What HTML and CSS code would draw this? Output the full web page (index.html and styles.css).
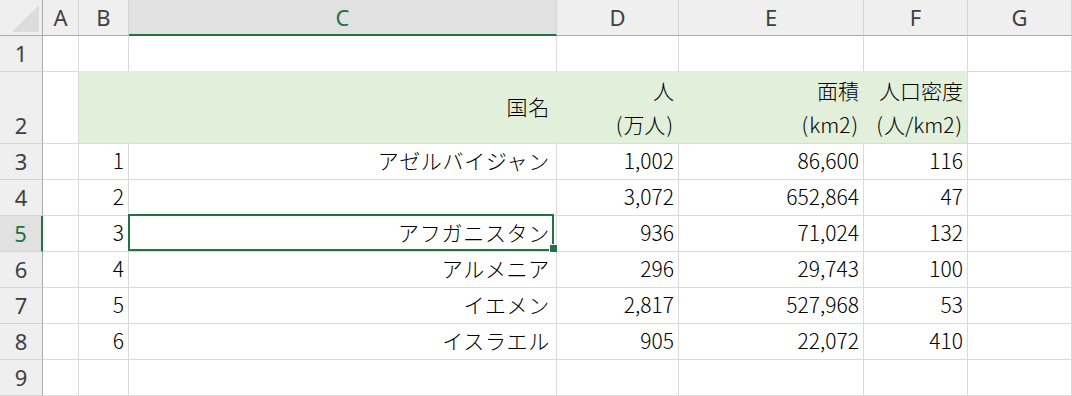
FILE: index.html
```html
<!DOCTYPE html>
<html lang="ja">
<head>
<meta charset="utf-8">
<title>Sheet</title>
<link rel="stylesheet" href="styles.css">
</head>
<body>
<div class="sheet">
  <div class="ch corner"><svg width="42" height="35" viewBox="0 0 42 35"><polygon points="12,32 39,32 39,5" fill="#dcdcdc"/></svg></div>
  <div class="ch">A</div>
  <div class="ch">B</div>
  <div class="ch sel">C</div>
  <div class="ch">D</div>
  <div class="ch">E</div>
  <div class="ch">F</div>
  <div class="ch">G</div>

  <div class="rh">1</div>
  <div class="c"></div>
  <div class="c gt"></div>
  <div class="c gt"></div>
  <div class="c gt"></div>
  <div class="c gt"></div>
  <div class="c gt"></div>
  <div class="c"></div>

  <div class="rh">2</div>
  <div class="c"></div>
  <div class="c g"></div>
  <div class="c g mid name">国名</div>
  <div class="c g mid wrap"><div>人<br><span class="p">(</span>万人<span class="p">)</span></div></div>
  <div class="c g mid wrap"><div>面積<br><span class="p">(</span>km2<span class="p">)</span></div></div>
  <div class="c g gl mid wrap"><div>人口密度<br><span class="p">(</span>人/km2<span class="p">)</span></div></div>
  <div class="c"></div>

  <div class="rh">3</div>
  <div class="c"></div>
  <div class="c">1</div>
  <div class="c name">アゼルバイジャン</div>
  <div class="c">1,002</div>
  <div class="c">86,600</div>
  <div class="c">116</div>
  <div class="c"></div>

  <div class="rh">4</div>
  <div class="c"></div>
  <div class="c">2</div>
  <div class="c name"></div>
  <div class="c">3,072</div>
  <div class="c">652,864</div>
  <div class="c">47</div>
  <div class="c"></div>

  <div class="rh rsel">5</div>
  <div class="c"></div>
  <div class="c">3</div>
  <div class="c name">アフガニスタン<span class="selbox"><span class="handle"></span></span></div>
  <div class="c">936</div>
  <div class="c">71,024</div>
  <div class="c">132</div>
  <div class="c"></div>

  <div class="rh">6</div>
  <div class="c"></div>
  <div class="c">4</div>
  <div class="c name">アルメニア</div>
  <div class="c">296</div>
  <div class="c">29,743</div>
  <div class="c">100</div>
  <div class="c"></div>

  <div class="rh">7</div>
  <div class="c"></div>
  <div class="c">5</div>
  <div class="c name">イエメン</div>
  <div class="c">2,817</div>
  <div class="c">527,968</div>
  <div class="c">53</div>
  <div class="c"></div>

  <div class="rh">8</div>
  <div class="c"></div>
  <div class="c">6</div>
  <div class="c name">イスラエル</div>
  <div class="c">905</div>
  <div class="c">22,072</div>
  <div class="c">410</div>
  <div class="c"></div>

  <div class="rh">9</div>
  <div class="c"></div>
  <div class="c"></div>
  <div class="c"></div>
  <div class="c"></div>
  <div class="c"></div>
  <div class="c"></div>
  <div class="c"></div>
</div>
</body>
</html>
```
FILE: styles.css
```css
html, body {
  margin: 0;
  padding: 0;
  background: #ffffff;
}
.sheet {
  display: grid;
  grid-template-columns: 43px 36px 50px 428px 122px 185px 104px 1fr;
  grid-template-rows: 36px 36px 72px repeat(7, 36px);
  width: 1072px;
  height: 396px;
  overflow: hidden;
}
.ch {
  box-sizing: border-box;
  background: #efefef;
  border-right: 1px solid #d4d4d4;
  border-bottom: 1px solid #ababab;
  display: flex;
  align-items: center;
  justify-content: center;
  font-family: "Noto Sans", "Liberation Sans", sans-serif;
  font-size: 22px;
  color: #404040;
  padding-bottom: 2px;
}
.ch.corner {
  border-right: 1px solid #ababab;
  padding: 0;
  align-items: flex-start;
  justify-content: flex-start;
}
.ch.corner svg {
  display: block;
}
.ch.sel {
  background: #e1e1e1;
  color: #217346;
  border-bottom: 2px solid #217346;
  padding-bottom: 1px;
}
.rh {
  box-sizing: border-box;
  background: #efefef;
  border-right: 1px solid #ababab;
  border-bottom: 1px solid #d4d4d4;
  display: flex;
  align-items: flex-end;
  justify-content: center;
  font-family: "Noto Sans", "Liberation Sans", sans-serif;
  font-size: 22px;
  line-height: 30px;
  padding-bottom: 3px;
  color: #404040;
}
.rh.rsel {
  background: #e1e1e1;
  color: #217346;
  border-right: 2px solid #217346;
}
.c {
  position: relative;
  box-sizing: border-box;
  border-right: 1px solid #dadada;
  border-bottom: 1px solid #dadada;
  display: flex;
  align-items: flex-end;
  justify-content: flex-end;
  padding: 0 4px 2px 4px;
  font-family: "Noto Sans CJK JP", "Noto Sans", sans-serif;
  font-size: 21px;
  font-weight: 300;
  line-height: 33px;
  color: #000000;
  white-space: nowrap;
}
.c.name {
  letter-spacing: 0.7px;
  padding-right: 6px;
}
.c.gt {
  border-bottom-color: #e2efda;
}
.c.g {
  background: #e2efda;
  border-right-color: #e2efda;
}
.c.g.gl {
  border-right-color: #dadada;
}
.c.mid {
  align-items: center;
}
.c.wrap {
  line-height: 34px;
  text-align: right;
}
.p {
  padding: 0 1px;
}
.selbox {
  position: absolute;
  left: -1px;
  top: -2px;
  right: 2px;
  bottom: 0;
  border: 2px solid #217346;
  box-sizing: border-box;
}
.handle {
  position: absolute;
  right: -5px;
  bottom: -3px;
  width: 7px;
  height: 7px;
  background: #217346;
  box-shadow: 0 0 0 1px #ffffff;
}
```
